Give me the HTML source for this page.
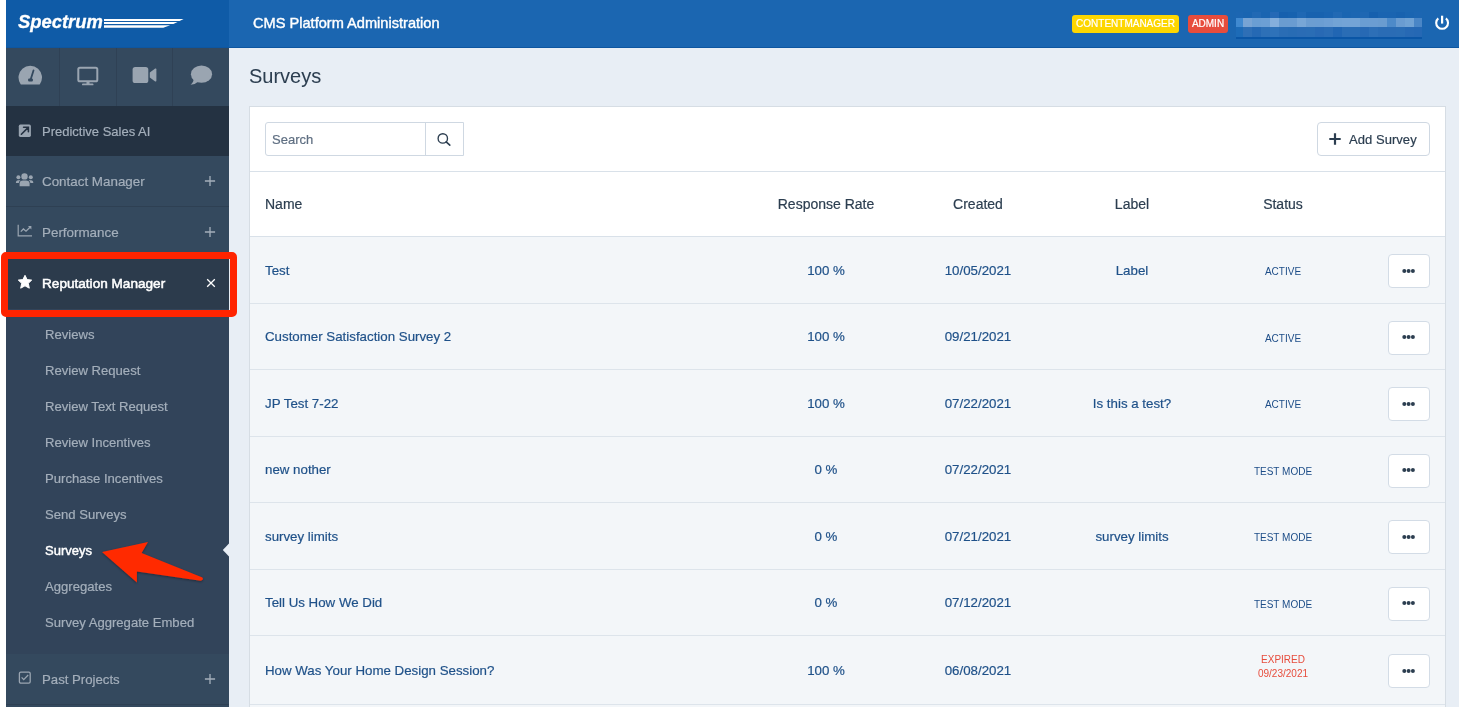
<!DOCTYPE html>
<html><head><meta charset="utf-8"><title>Surveys</title>
<style>
html,body{margin:0;padding:0;}
body{width:1459px;height:707px;position:relative;overflow:hidden;background:#fff;font-family:"Liberation Sans", sans-serif;}
.t{position:absolute;line-height:1;white-space:nowrap;will-change:transform;-webkit-text-stroke:0.2px currentColor;}
.ns{-webkit-text-stroke:0 !important;}
</style></head><body>
<div style="position:absolute;left:6px;top:0;width:223px;height:48px;background:#0f5ba7"></div><div style="position:absolute;left:229px;top:0;width:1230px;height:48px;background:#1b66b1"></div><div style="position:absolute;left:6px;top:47px;width:1453px;height:1px;background:#0e56a0"></div><div class="t" style="left:17.6px;top:12.62px;font-size:18.4px;color:#fff;font-weight:bold;font-style:italic;letter-spacing:0px;-webkit-text-stroke:0.3px #fff">Spectrum</div><svg style="position:absolute;left:102px;top:18px" width="84" height="11" viewBox="0 0 84 11"><path d="M2 0.9 H81.6 L77.6 3.0 H2 Z M2 4.0 H75.6 L71.4 6.0 H2 Z M2 7.3 H68.2 L61.3 9.7 H2 Z" fill="#fff"/></svg><div class="t" style="left:252.6px;top:16.34px;font-size:14.6px;color:#fff;-webkit-text-stroke:0.4px #fff">CMS Platform Administration</div><div style="position:absolute;left:1072px;top:15px;width:107px;height:18px;background:#fdd600;border-radius:3px"></div><div class="t" style="left:1072.0px;width:107px;text-align:center;top:19.04px;font-size:10px;color:#fff;-webkit-text-stroke:0.2px #fff">CONTENTMANAGER</div><div style="position:absolute;left:1188px;top:15px;width:40px;height:18px;background:#e74c3c;border-radius:3px"></div><div class="t" style="left:1188.0px;width:40px;text-align:center;top:19.04px;font-size:10px;color:#fff;-webkit-text-stroke:0.2px #fff">ADMIN</div><svg style="position:absolute;left:1236px;top:12px" width="186" height="27" shape-rendering="crispEdges"><rect x="0" y="0" width="7" height="6" fill="#1c66b2"/><rect x="0" y="6" width="7" height="9" fill="#4089d0"/><rect x="0" y="15" width="7" height="10" fill="#1d6bb7"/><rect x="7" y="0" width="9" height="6" fill="#1a65b1"/><rect x="7" y="6" width="9" height="9" fill="#78a4d4"/><rect x="7" y="15" width="9" height="10" fill="#2e6fb6"/><rect x="16" y="0" width="9" height="6" fill="#2169b4"/><rect x="16" y="6" width="9" height="9" fill="#6a9ed3"/><rect x="16" y="15" width="9" height="10" fill="#2569b4"/><rect x="25" y="0" width="9" height="6" fill="#1a65b1"/><rect x="25" y="6" width="9" height="9" fill="#6c9fd4"/><rect x="25" y="15" width="9" height="10" fill="#2d70b7"/><rect x="34" y="0" width="9" height="6" fill="#2569b6"/><rect x="34" y="6" width="9" height="9" fill="#85afdc"/><rect x="34" y="15" width="9" height="10" fill="#2e72b9"/><rect x="43" y="0" width="9" height="6" fill="#1660ae"/><rect x="43" y="6" width="9" height="9" fill="#6a9cd0"/><rect x="43" y="15" width="9" height="10" fill="#2a6db5"/><rect x="52" y="0" width="9" height="6" fill="#1762af"/><rect x="52" y="6" width="9" height="9" fill="#6a9cd1"/><rect x="52" y="15" width="9" height="10" fill="#286cb4"/><rect x="61" y="0" width="9" height="6" fill="#1f68b4"/><rect x="61" y="6" width="9" height="9" fill="#78a6d6"/><rect x="61" y="15" width="9" height="10" fill="#2a6cb5"/><rect x="70" y="0" width="9" height="6" fill="#1862af"/><rect x="70" y="6" width="9" height="9" fill="#6c9dd1"/><rect x="70" y="15" width="9" height="10" fill="#2a6db5"/><rect x="79" y="0" width="9" height="6" fill="#1862af"/><rect x="79" y="6" width="9" height="9" fill="#6b9dd2"/><rect x="79" y="15" width="9" height="10" fill="#2869b4"/><rect x="88" y="0" width="9" height="6" fill="#1a64b1"/><rect x="88" y="6" width="9" height="9" fill="#6e9fd4"/><rect x="88" y="15" width="9" height="10" fill="#2a6cb5"/><rect x="97" y="0" width="9" height="6" fill="#2169b4"/><rect x="97" y="6" width="9" height="9" fill="#72a3d5"/><rect x="97" y="15" width="9" height="10" fill="#2166b3"/><rect x="106" y="0" width="9" height="6" fill="#1a65b1"/><rect x="106" y="6" width="9" height="9" fill="#74a4d6"/><rect x="106" y="15" width="9" height="10" fill="#2a6db5"/><rect x="115" y="0" width="9" height="6" fill="#1c66b2"/><rect x="115" y="6" width="9" height="9" fill="#74a4d6"/><rect x="115" y="15" width="9" height="10" fill="#2a6db5"/><rect x="124" y="0" width="9" height="6" fill="#1e67b3"/><rect x="124" y="6" width="9" height="9" fill="#6a9dd2"/><rect x="124" y="15" width="9" height="10" fill="#2769b4"/><rect x="133" y="0" width="9" height="6" fill="#1660ae"/><rect x="133" y="6" width="9" height="9" fill="#6b9dd2"/><rect x="133" y="15" width="9" height="10" fill="#2d6fb7"/><rect x="142" y="0" width="9" height="6" fill="#1a64b1"/><rect x="142" y="6" width="9" height="9" fill="#6a9cd0"/><rect x="142" y="15" width="9" height="10" fill="#2a6cb5"/><rect x="151" y="0" width="9" height="6" fill="#1a64b1"/><rect x="151" y="6" width="9" height="9" fill="#4d8ac9"/><rect x="151" y="15" width="9" height="10" fill="#2a6cb5"/><rect x="160" y="0" width="9" height="6" fill="#1862af"/><rect x="160" y="6" width="9" height="9" fill="#6a9cd1"/><rect x="160" y="15" width="9" height="10" fill="#2a6db5"/><rect x="169" y="0" width="9" height="6" fill="#1a65b1"/><rect x="169" y="6" width="9" height="9" fill="#70a2d4"/><rect x="169" y="15" width="9" height="10" fill="#2769b4"/><rect x="178" y="0" width="8" height="6" fill="#1c66b2"/><rect x="178" y="6" width="8" height="9" fill="#4a86c6"/><rect x="178" y="15" width="8" height="10" fill="#2568b4"/><rect x="0" y="25" width="186" height="2" fill="#0a56a6"/></svg><svg style="position:absolute;left:1435px;top:15px" width="15" height="16" viewBox="0 0 15 16"><path d="M3.3 3.4 A5.9 5.9 0 1 0 10.9 3.4" fill="none" stroke="#fff" stroke-width="2.1" stroke-linecap="butt"/><path d="M7.1 0.7 V8.6" stroke="#fff" stroke-width="2.2"/></svg><div style="position:absolute;left:6px;top:48px;width:223px;height:659px;background:#34495e"></div><div style="position:absolute;left:59px;top:48px;width:1px;height:58px;background:#2f4155"></div><div style="position:absolute;left:116px;top:48px;width:1px;height:58px;background:#2f4155"></div><div style="position:absolute;left:172px;top:48px;width:1px;height:58px;background:#2f4155"></div><svg style="position:absolute;left:18px;top:65px" width="25" height="21" viewBox="0 0 25 21"><path d="M2.65 19.2 A11.75 11.75 0 1 1 21.85 19.2 Q21.6 19.5 21 19.5 H3.5 Q2.9 19.5 2.65 19.2 Z" fill="#9aa5b1"/><path d="M15.5 5.4 L12.9 13.8" stroke="#34495e" stroke-width="1.8" stroke-linecap="round"/><rect x="10.1" y="13.4" width="4.8" height="3.2" rx="1" fill="#34495e"/></svg><svg style="position:absolute;left:77px;top:66px" width="22" height="21" viewBox="0 0 22 21"><rect x="1.3" y="1.7" width="19" height="13.6" rx="1.6" fill="none" stroke="#9aa5b1" stroke-width="2"/><rect x="9.5" y="15" width="3" height="3" fill="#9aa5b1"/><rect x="5" y="17.4" width="11.5" height="1.9" rx="0.9" fill="#9aa5b1"/></svg><svg style="position:absolute;left:132px;top:66px" width="26" height="19" viewBox="0 0 26 19"><rect x="0.6" y="1" width="15.7" height="16" rx="2.6" fill="#9aa5b1"/><path d="M17.8 6.5 L23.2 2.6 Q24.4 2 24.4 3.4 V14.6 Q24.4 16 23.2 15.4 L17.8 11.5 Z" fill="#9aa5b1"/></svg><svg style="position:absolute;left:190px;top:65px" width="23" height="21" viewBox="0 0 23 21"><ellipse cx="11.5" cy="9.2" rx="10.6" ry="8.6" fill="#9aa5b1"/><path d="M3.5 13.5 Q4 17 0.6 19.8 Q5.5 19.5 8 16.8 Z" fill="#9aa5b1"/></svg><div style="position:absolute;left:6px;top:106px;width:223px;height:50px;background:#243242"></div><div style="position:absolute;left:6px;top:206px;width:223px;height:1px;background:#2e4053"></div><div style="position:absolute;left:6px;top:257px;width:223px;height:52px;background:#2c3b4c"></div><div style="position:absolute;left:6px;top:309px;width:223px;height:345px;background:#32445a"></div><div style="position:absolute;left:6px;top:704px;width:223px;height:1px;background:#2e4053"></div><div class="t" style="left:42px;top:124.80px;font-size:13px;color:#a4afbb;">Predictive Sales AI</div><div class="t" style="left:42px;top:174.86px;font-size:13.4px;color:#a4afbb;">Contact Manager</div><div class="t" style="left:42px;top:226.06px;font-size:13.4px;color:#a4afbb;">Performance</div><div class="t" style="left:42px;top:277.09px;font-size:13.6px;color:#fff;-webkit-text-stroke:0.5px #fff">Reputation Manager</div><div class="t" style="left:42px;top:672.83px;font-size:13.2px;color:#a4afbb;">Past Projects</div><svg style="position:absolute;left:204px;top:175px" width="12" height="12" viewBox="0 0 12 12"><path d="M6 0.9 V11.1 M0.9 6 H11.1" stroke="#a4afbb" stroke-width="1.3"/></svg><svg style="position:absolute;left:204px;top:226px" width="12" height="12" viewBox="0 0 12 12"><path d="M6 0.9 V11.1 M0.9 6 H11.1" stroke="#a4afbb" stroke-width="1.3"/></svg><svg style="position:absolute;left:204px;top:673px" width="12" height="12" viewBox="0 0 12 12"><path d="M6 0.9 V11.1 M0.9 6 H11.1" stroke="#a4afbb" stroke-width="1.3"/></svg><svg style="position:absolute;left:206px;top:278px" width="10" height="10" viewBox="0 0 10 10"><path d="M1.2 1.2 L8.8 8.8 M8.8 1.2 L1.2 8.8" stroke="#fff" stroke-width="1.3"/></svg><svg style="position:absolute;left:18px;top:124px" width="14" height="14" viewBox="0 0 14 14"><rect x="0.8" y="0.6" width="12.1" height="12.3" rx="1.6" fill="#9aa5b1"/><path d="M3.4 10.2 L10 3.6 M5.6 3.2 H10.4 V7.8" fill="none" stroke="#243141" stroke-width="1.6" stroke-linecap="round"/></svg><svg style="position:absolute;left:15px;top:172px" width="20" height="15" viewBox="0 0 20 15"><circle cx="9.5" cy="4.4" r="3.2" fill="#9aa5b1"/><path d="M4.6 14.2 V11.6 Q4.6 8.4 8 8.4 H11 Q14.6 8.4 14.6 11.6 V14.2 Z" fill="#9aa5b1"/><circle cx="3.4" cy="5.2" r="2" fill="#9aa5b1"/><circle cx="15.8" cy="5.2" r="2" fill="#9aa5b1"/><path d="M0.9 11 Q0.9 8.2 3.2 8.2 H5.6 Q3.8 9.4 3.8 11 Z M18.3 11 Q18.3 8.2 16 8.2 H13.6 Q15.4 9.4 15.4 11 Z" fill="#9aa5b1"/></svg><svg style="position:absolute;left:17px;top:224px" width="16" height="14" viewBox="0 0 16 14"><path d="M1.2 0.8 V11.8 H15" fill="none" stroke="#9aa5b1" stroke-width="1.2"/><path d="M3.8 7.6 L6.4 5 L9 7.2 L13 3.2" fill="none" stroke="#9aa5b1" stroke-width="1.3"/><path d="M11 2 H14.4 V5.4 Z" fill="#9aa5b1"/></svg><svg style="position:absolute;left:17px;top:274px" width="16" height="16" viewBox="0 0 16 16"><path d="M8 1.3 L10.1 5.6 L14.7 6.1 L11.3 9.3 L12.3 14.2 L8 11.8 L3.7 14.2 L4.7 9.3 L1.3 6.1 L5.9 5.6 Z" fill="#fff" stroke="#fff" stroke-width="1" stroke-linejoin="round"/></svg><svg style="position:absolute;left:18px;top:671px" width="14" height="14" viewBox="0 0 14 14"><rect x="1.4" y="1.2" width="10.8" height="11" rx="1.4" fill="none" stroke="#9aa5b1" stroke-width="1.3"/><path d="M3.6 6.4 L5.7 8.6 L10.2 4" fill="none" stroke="#9aa5b1" stroke-width="1.3"/></svg><div class="t" style="left:45px;top:327.71px;font-size:13.1px;color:#a4afbb;">Reviews</div><div class="t" style="left:45px;top:363.71px;font-size:13.1px;color:#a4afbb;">Review Request</div><div class="t" style="left:45px;top:399.71px;font-size:13.1px;color:#a4afbb;">Review Text Request</div><div class="t" style="left:45px;top:435.71px;font-size:13.1px;color:#a4afbb;">Review Incentives</div><div class="t" style="left:45px;top:471.71px;font-size:13.1px;color:#a4afbb;">Purchase Incentives</div><div class="t" style="left:45px;top:507.71px;font-size:13.1px;color:#a4afbb;">Send Surveys</div><div class="t" style="left:45px;top:544.30px;font-size:13px;color:#fff;-webkit-text-stroke:0.45px #fff">Surveys</div><div class="t" style="left:45px;top:579.71px;font-size:13.1px;color:#a4afbb;">Aggregates</div><div class="t" style="left:45px;top:615.71px;font-size:13.1px;color:#a4afbb;">Survey Aggregate Embed</div><svg style="position:absolute;left:222px;top:543px" width="7" height="14" viewBox="0 0 7 14"><path d="M7 0.5 L0.8 7 L7 13.5 Z" fill="#e8eef5"/></svg><div style="position:absolute;left:229px;top:48px;width:1230px;height:659px;background:#e8eef5"></div><div class="t" style="left:249px;top:65.57px;font-size:20px;color:#2c3e50;-webkit-text-stroke:0.05px #2c3e50">Surveys</div><div style="position:absolute;left:249px;top:106px;width:1195px;height:640px;background:#fff;border:1px solid #d6dde4"></div><div style="position:absolute;left:265px;top:122px;width:197px;height:32px;border:1px solid #cfd8e2;border-radius:3px 0 0 3px;background:#fff"></div><div style="position:absolute;left:425px;top:123px;width:1px;height:32px;background:#cfd8e2"></div><div class="t" style="left:272px;top:133.00px;font-size:13px;color:#5f6f82;">Search</div><svg style="position:absolute;left:436px;top:132px" width="16" height="15" viewBox="0 0 16 15"><circle cx="6.8" cy="6.4" r="4.7" fill="none" stroke="#2c3e50" stroke-width="1.35"/><path d="M10.2 9.8 L13.8 13.2" stroke="#2c3e50" stroke-width="1.6" stroke-linecap="round"/></svg><div style="position:absolute;left:1317px;top:122px;width:111px;height:32px;border:1px solid #cfd8e2;border-radius:4px;background:#fff"></div><svg style="position:absolute;left:1328px;top:132px" width="14" height="14" viewBox="0 0 14 14"><path d="M7 1.3 V12.7 M1.3 7 H12.7" stroke="#2c3e50" stroke-width="2.2"/></svg><div class="t" style="left:1349px;top:132.90px;font-size:13px;color:#2c3e50;letter-spacing:0.05px">Add Survey</div><div style="position:absolute;left:250px;top:171px;width:1195px;height:1px;background:#d9e1e9"></div><div style="position:absolute;left:250px;top:236px;width:1195px;height:1px;background:#d9e1e9"></div><div class="t" style="left:265px;top:197.15px;font-size:14px;color:#2c3e50;">Name</div><div class="t" style="left:745.5px;width:160px;text-align:center;top:197.15px;font-size:14px;color:#2c3e50;">Response Rate</div><div class="t" style="left:918.3px;width:120px;text-align:center;top:197.15px;font-size:14px;color:#2c3e50;">Created</div><div class="t" style="left:1072.0px;width:120px;text-align:center;top:197.15px;font-size:14px;color:#2c3e50;">Label</div><div class="t" style="left:1223.0px;width:120px;text-align:center;top:197.15px;font-size:14px;color:#2c3e50;">Status</div><div style="position:absolute;left:250px;top:237px;width:1195px;height:66px;background:#f3f6f9"></div><div style="position:absolute;left:250px;top:303px;width:1195px;height:1px;background:#dde4eb"></div><div class="t" style="left:265px;top:263.84px;font-size:13.3px;color:#1f5189;">Test</div><div class="t" style="left:755.5px;width:140px;text-align:center;top:263.84px;font-size:13.3px;color:#1f5189;">100 %</div><div class="t" style="left:908.3px;width:140px;text-align:center;top:263.84px;font-size:13.3px;color:#1f5189;">10/05/2021</div><div class="t" style="left:1052.0px;width:160px;text-align:center;top:263.84px;font-size:13.3px;color:#1f5189;">Label</div><div class="t" style="left:1233.0px;width:100px;text-align:center;top:267.14px;font-size:10px;color:#1d4d88;-webkit-text-stroke:0">ACTIVE</div><div style="position:absolute;left:1388px;top:254px;width:40px;height:32px;border:1px solid #d3dce6;border-radius:4px;background:#fff"></div><svg style="position:absolute;left:1401px;top:267.5px" width="16" height="6" viewBox="0 0 16 6"><circle cx="3.3" cy="3" r="2" fill="#2c3e50"/><circle cx="7.6" cy="3" r="2" fill="#2c3e50"/><circle cx="11.9" cy="3" r="2" fill="#2c3e50"/></svg><div style="position:absolute;left:250px;top:304px;width:1195px;height:65px;background:#f3f6f9"></div><div style="position:absolute;left:250px;top:369px;width:1195px;height:1px;background:#dde4eb"></div><div class="t" style="left:265px;top:330.34px;font-size:13.3px;color:#1f5189;">Customer Satisfaction Survey 2</div><div class="t" style="left:755.5px;width:140px;text-align:center;top:330.34px;font-size:13.3px;color:#1f5189;">100 %</div><div class="t" style="left:908.3px;width:140px;text-align:center;top:330.34px;font-size:13.3px;color:#1f5189;">09/21/2021</div><div class="t" style="left:1233.0px;width:100px;text-align:center;top:333.64px;font-size:10px;color:#1d4d88;-webkit-text-stroke:0">ACTIVE</div><div style="position:absolute;left:1388px;top:321px;width:40px;height:32px;border:1px solid #d3dce6;border-radius:4px;background:#fff"></div><svg style="position:absolute;left:1401px;top:334.0px" width="16" height="6" viewBox="0 0 16 6"><circle cx="3.3" cy="3" r="2" fill="#2c3e50"/><circle cx="7.6" cy="3" r="2" fill="#2c3e50"/><circle cx="11.9" cy="3" r="2" fill="#2c3e50"/></svg><div style="position:absolute;left:250px;top:370px;width:1195px;height:66px;background:#f3f6f9"></div><div style="position:absolute;left:250px;top:436px;width:1195px;height:1px;background:#dde4eb"></div><div class="t" style="left:265px;top:396.84px;font-size:13.3px;color:#1f5189;">JP Test 7-22</div><div class="t" style="left:755.5px;width:140px;text-align:center;top:396.84px;font-size:13.3px;color:#1f5189;">100 %</div><div class="t" style="left:908.3px;width:140px;text-align:center;top:396.84px;font-size:13.3px;color:#1f5189;">07/22/2021</div><div class="t" style="left:1052.0px;width:160px;text-align:center;top:396.84px;font-size:13.3px;color:#1f5189;">Is this a test?</div><div class="t" style="left:1233.0px;width:100px;text-align:center;top:400.14px;font-size:10px;color:#1d4d88;-webkit-text-stroke:0">ACTIVE</div><div style="position:absolute;left:1388px;top:387px;width:40px;height:32px;border:1px solid #d3dce6;border-radius:4px;background:#fff"></div><svg style="position:absolute;left:1401px;top:400.5px" width="16" height="6" viewBox="0 0 16 6"><circle cx="3.3" cy="3" r="2" fill="#2c3e50"/><circle cx="7.6" cy="3" r="2" fill="#2c3e50"/><circle cx="11.9" cy="3" r="2" fill="#2c3e50"/></svg><div style="position:absolute;left:250px;top:437px;width:1195px;height:65px;background:#f3f6f9"></div><div style="position:absolute;left:250px;top:502px;width:1195px;height:1px;background:#dde4eb"></div><div class="t" style="left:265px;top:463.34px;font-size:13.3px;color:#1f5189;">new nother</div><div class="t" style="left:755.5px;width:140px;text-align:center;top:463.34px;font-size:13.3px;color:#1f5189;">0 %</div><div class="t" style="left:908.3px;width:140px;text-align:center;top:463.34px;font-size:13.3px;color:#1f5189;">07/22/2021</div><div class="t" style="left:1233.0px;width:100px;text-align:center;top:466.64px;font-size:10px;color:#1d4d88;-webkit-text-stroke:0">TEST MODE</div><div style="position:absolute;left:1388px;top:454px;width:40px;height:32px;border:1px solid #d3dce6;border-radius:4px;background:#fff"></div><svg style="position:absolute;left:1401px;top:467.0px" width="16" height="6" viewBox="0 0 16 6"><circle cx="3.3" cy="3" r="2" fill="#2c3e50"/><circle cx="7.6" cy="3" r="2" fill="#2c3e50"/><circle cx="11.9" cy="3" r="2" fill="#2c3e50"/></svg><div style="position:absolute;left:250px;top:503px;width:1195px;height:66px;background:#f3f6f9"></div><div style="position:absolute;left:250px;top:569px;width:1195px;height:1px;background:#dde4eb"></div><div class="t" style="left:265px;top:529.84px;font-size:13.3px;color:#1f5189;">survey limits</div><div class="t" style="left:755.5px;width:140px;text-align:center;top:529.84px;font-size:13.3px;color:#1f5189;">0 %</div><div class="t" style="left:908.3px;width:140px;text-align:center;top:529.84px;font-size:13.3px;color:#1f5189;">07/21/2021</div><div class="t" style="left:1052.0px;width:160px;text-align:center;top:529.84px;font-size:13.3px;color:#1f5189;">survey limits</div><div class="t" style="left:1233.0px;width:100px;text-align:center;top:533.13px;font-size:10px;color:#1d4d88;-webkit-text-stroke:0">TEST MODE</div><div style="position:absolute;left:1388px;top:520px;width:40px;height:32px;border:1px solid #d3dce6;border-radius:4px;background:#fff"></div><svg style="position:absolute;left:1401px;top:533.5px" width="16" height="6" viewBox="0 0 16 6"><circle cx="3.3" cy="3" r="2" fill="#2c3e50"/><circle cx="7.6" cy="3" r="2" fill="#2c3e50"/><circle cx="11.9" cy="3" r="2" fill="#2c3e50"/></svg><div style="position:absolute;left:250px;top:570px;width:1195px;height:65px;background:#f3f6f9"></div><div style="position:absolute;left:250px;top:635px;width:1195px;height:1px;background:#dde4eb"></div><div class="t" style="left:265px;top:596.34px;font-size:13.3px;color:#1f5189;">Tell Us How We Did</div><div class="t" style="left:755.5px;width:140px;text-align:center;top:596.34px;font-size:13.3px;color:#1f5189;">0 %</div><div class="t" style="left:908.3px;width:140px;text-align:center;top:596.34px;font-size:13.3px;color:#1f5189;">07/12/2021</div><div class="t" style="left:1233.0px;width:100px;text-align:center;top:599.63px;font-size:10px;color:#1d4d88;-webkit-text-stroke:0">TEST MODE</div><div style="position:absolute;left:1388px;top:587px;width:40px;height:32px;border:1px solid #d3dce6;border-radius:4px;background:#fff"></div><svg style="position:absolute;left:1401px;top:600.0px" width="16" height="6" viewBox="0 0 16 6"><circle cx="3.3" cy="3" r="2" fill="#2c3e50"/><circle cx="7.6" cy="3" r="2" fill="#2c3e50"/><circle cx="11.9" cy="3" r="2" fill="#2c3e50"/></svg><div style="position:absolute;left:250px;top:636px;width:1195px;height:68px;background:#f3f6f9"></div><div style="position:absolute;left:250px;top:704px;width:1195px;height:1px;background:#dde4eb"></div><div class="t" style="left:265px;top:663.84px;font-size:13.3px;color:#1f5189;">How Was Your Home Design Session?</div><div class="t" style="left:755.5px;width:140px;text-align:center;top:663.84px;font-size:13.3px;color:#1f5189;">100 %</div><div class="t" style="left:908.3px;width:140px;text-align:center;top:663.84px;font-size:13.3px;color:#1f5189;">06/08/2021</div><div class="t" style="left:1233.0px;width:100px;text-align:center;top:654.74px;font-size:10px;color:#e74c3c;-webkit-text-stroke:0">EXPIRED</div><div class="t" style="left:1233.0px;width:100px;text-align:center;top:668.83px;font-size:10px;color:#e74c3c;-webkit-text-stroke:0">09/23/2021</div><div style="position:absolute;left:1388px;top:654px;width:40px;height:32px;border:1px solid #d3dce6;border-radius:4px;background:#fff"></div><svg style="position:absolute;left:1401px;top:667.5px" width="16" height="6" viewBox="0 0 16 6"><circle cx="3.3" cy="3" r="2" fill="#2c3e50"/><circle cx="7.6" cy="3" r="2" fill="#2c3e50"/><circle cx="11.9" cy="3" r="2" fill="#2c3e50"/></svg><div style="position:absolute;left:250px;top:705px;width:1195px;height:10px;background:#f3f6f9"></div><div style="position:absolute;left:1px;top:252px;width:222px;height:51px;border:7px solid #ff2400;border-radius:5px"></div><svg style="position:absolute;left:95px;top:535px" width="115" height="55" viewBox="95 535 115 55"><defs><filter id="sh" x="-20%" y="-20%" width="140%" height="140%"><feDropShadow dx="0" dy="1" stdDeviation="1" flood-color="#000" flood-opacity="0.35"/></filter></defs><path d="M102 552 L148 542 L141.6 553 L202.4 577.6 Q204 580 200.6 580.8 L136.9 571.6 L136.9 582.6 Z" fill="#ff2a00" filter="url(#sh)"/></svg>
</body></html>
